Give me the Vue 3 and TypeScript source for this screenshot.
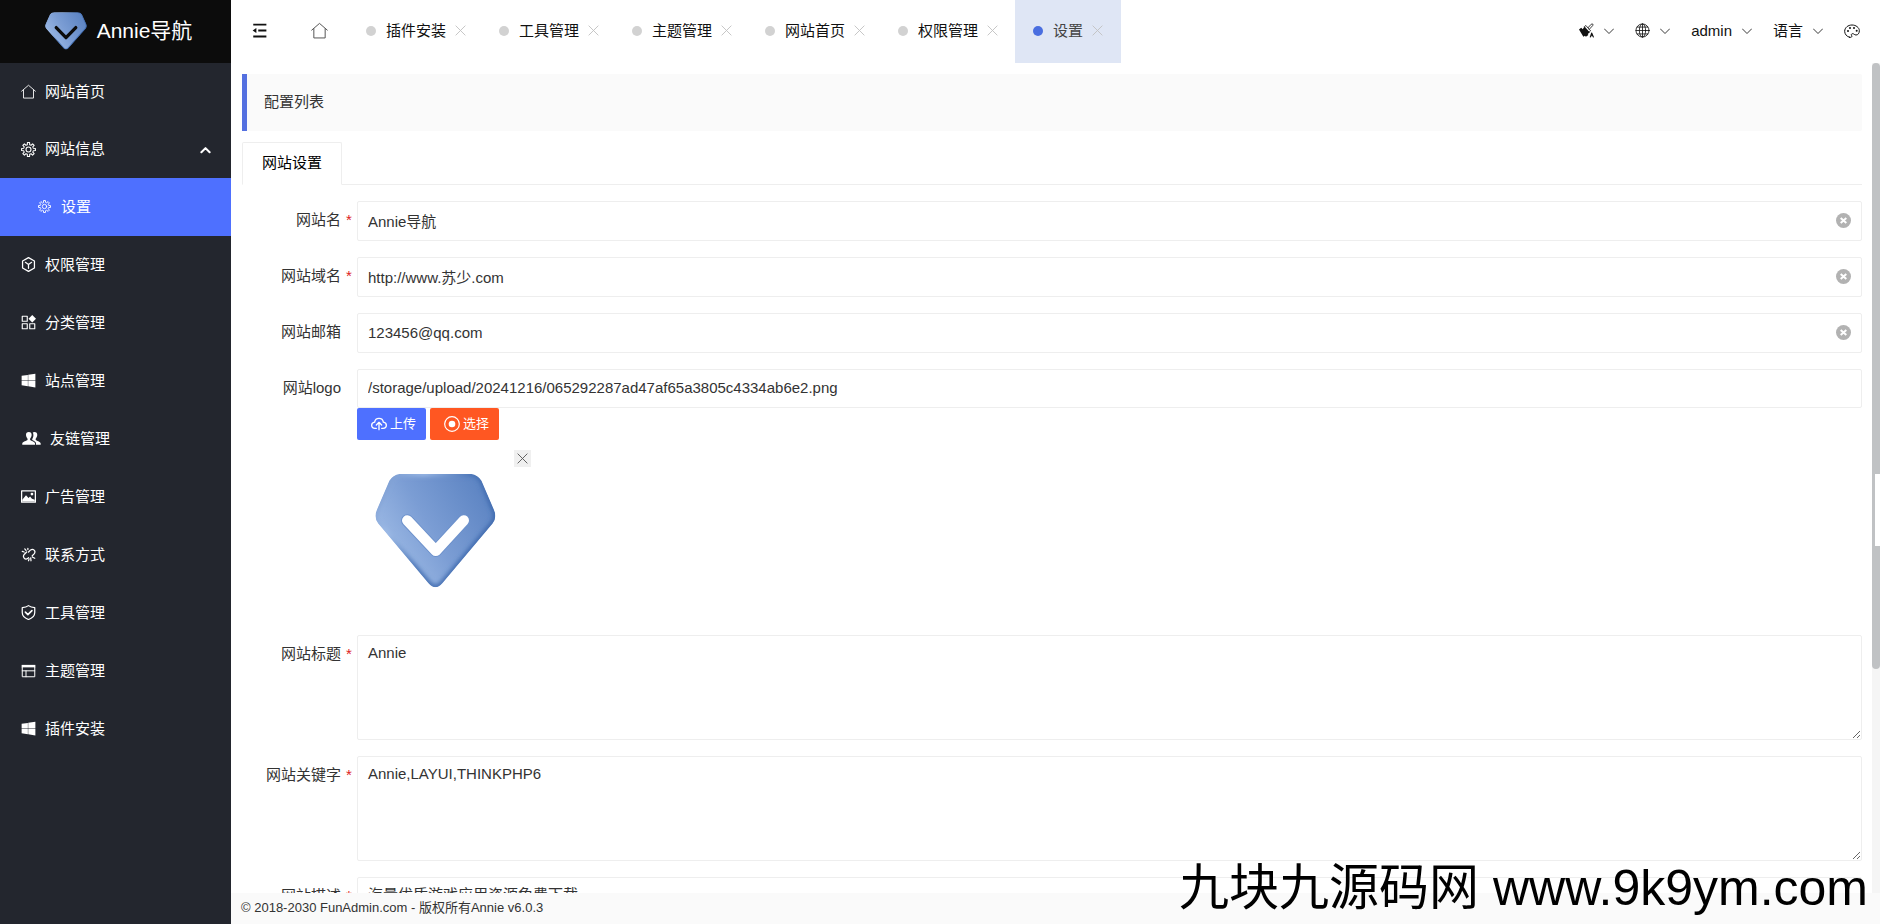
<script setup lang="ts">
import { ref } from 'vue'

interface MenuItem {
  label: string
  icon: string
  wide?: boolean
}

function gearPath(teeth: number, outer: number, inner: number): string {
  const points: string[] = []
  const step = (Math.PI * 2) / teeth
  for (let i = 0; i < teeth; i++) {
    const a = i * step
    const corners: [number, number][] = [
      [a - step * 0.3, inner],
      [a - step * 0.2, outer],
      [a + step * 0.2, outer],
      [a + step * 0.3, inner],
    ]
    for (const [angle, radius] of corners) {
      points.push(`${(12 + radius * Math.sin(angle)).toFixed(2)} ${(12 - radius * Math.cos(angle)).toFixed(2)}`)
    }
  }
  return `M${points.join('L')}Z`
}

const line = 'fill="none" stroke="currentColor" stroke-linejoin="round" stroke-linecap="round"'
const icons: Record<string, string> = {
  home: `<path ${line} stroke-width="1.4" d="M1 11.500 12 2l11 9.500M4 9.500V22.500h16V9.500"/>`,
  gear: `<g ${line} stroke-width="1.700"><path d="${gearPath(8, 11.2, 8)}"/><circle cx="12" cy="12" r="4"/></g>`,
  cube: `<g ${line} stroke-width="2"><path d="M12 1 21.500 6.500v11L12 23l-9.500-5.500v-11Z"/><path d="M7 8.500l5 3.500 5-3.500M12 12v6"/></g>`,
  apps: `<g ${line} stroke-width="1.800"><path d="M2 2h8v8H2ZM2 14h8v8H2ZM14 14h8v8h-8Z"/></g><path fill="currentColor" d="M18 0l6 6-6 6-6-6Z"/>`,
  windows: `<path fill="currentColor" d="M1 4.500 11 3v8.600H1ZM11.600 2.800 23 1v10.600H11.600ZM1 12.300h10V21L1 19.600ZM11.600 12.300H23V23l-11.400-1.800Z"/>`,
  users: `<path fill="currentColor" d="M9.500 1.500c3 0 4.700 2 4.500 5-.2 2.600-1.300 4.500-2.500 5.800V14c1 2 7.500 2.500 8 6v2H-1v-2c.5-3.500 7.500-4 8.500-6v-1.700C6.300 11 5.200 9.100 5 6.500c-.2-3 1.500-5 4.500-5Z"/><path fill="currentColor" d="M18.500 1.500c3 0 4.700 2 4.500 5-.2 2.600-1.300 4.500-2.500 5.800V14c1 2 7.500 2.500 8 6v2H21v-3c-.7-2.500-4-3.500-6-4.700v-1.500c1.300-2 2-4 1.800-6.800 0-1.500-.4-2.600-1-3.500.7-.6 1.600-1 2.700-1Z"/>`,
  picture: `<path ${line} stroke-width="2" d="M1 3h22v18H1Z"/><path fill="currentColor" d="M2 20v-3l6-7 4 4.500 2.500-2.500 3 3.500L22 17v3Z"/><circle cx="17.500" cy="8" r="2.200" fill="currentColor"/>`,
  unlink: `<g ${line} stroke-width="2"><path d="M9 8 5.500 11.500c-4 4.500 1 10 5.500 6.500l1-1M12 8l3-3c4.500-3.500 9.500 1.500 6 6l-3 3M6 3l2 2.500M2 7l3 1M11 2v2M15.500 17.500 16 22M18 16l4 2M13 19l-1 3"/></g>`,
  shield: `<g ${line} stroke-width="2"><path d="M12 1c3 2.300 6 3 10 3.200V12c0 5.500-4 9-10 11.200C6 21 2 17.500 2 12V4.200C6 4 9 3.300 12 1Z"/><path stroke-width="2.600" d="m7 11.500 4 4 6.500-6.500"/></g>`,
  template: `<path fill="currentColor" d="M1 3h22v4H1Z"/><path ${line} stroke-width="1.600" d="M2 7v15h20V7M2 12.500h20M8 12.500V22"/>`,
  fold: `<path fill="currentColor" d="M2 1h21v3H2ZM10 10.500h13v3H10ZM2 20h21v3H2ZM1 12l6-4v8Z"/>`,
  brush: `<path fill="currentColor" d="M0 10.500 3.500 7.500 6 10l2.500-4 8.500 9-3 2.500 1 1.500-4 3-1.500-1.500L7 22Z"/><path ${line} stroke-width="1.300" d="M9 5.500 11 4l7.500 8.500-2 1.800ZM14.500 7.500l5-5.500c2-1.700 4 .5 2.300 2.300L16.500 10"/><path ${line} stroke-width="1.700" d="m18 22.500 2.300-6.500 2.700 6.500M18.800 20.500h3.200"/>`,
  globe: `<g ${line} stroke-width="1.300"><circle cx="12" cy="12" r="10.500"/><ellipse cx="12" cy="12" rx="5" ry="10.500"/><path d="M12 1.500v21M1.500 12h21M3.500 6.500h17M3.500 17.500h17"/></g>`,
  palette: `<path ${line} stroke-width="1.500" d="M8.500 21.500C4 20.500 1 16.500 1 12.500 1 7 6 3 12 3s11 4 11 8.500c0 4-2 6.500-5 6.500-2.500 0-3-2-5-2s-2.500 1.500-1.500 3-.5 3.200-3 2.500Z"/><g fill="currentColor"><circle cx="6" cy="12" r="1.500"/><circle cx="9" cy="7.500" r="1.500"/><circle cx="15" cy="7.500" r="1.500"/><circle cx="19" cy="11.500" r="1.500"/></g>`,
  down: `<path ${line} stroke-width="2" d="M1 7l11 11L23 7"/>`,
  up: `<path ${line} stroke-width="4.500" d="M3 18l9-9 9 9"/>`,
  close: `<path ${line} stroke-width="2" d="M2 2l20 20M22 2 2 22"/>`,
  clear: `<circle cx="12" cy="12" r="12" fill="#b2b2b2"/><path fill="none" stroke="#fff" stroke-width="3.200" d="m7.500 8 9 8m0-8-9 8"/>`,
  cloud: `<g ${line} stroke-width="2"><path d="M8 18.500H6C3 18.500 1 16.500 1 14s2-4.500 4.500-4.800C6 5.500 8.500 3.500 12 3.500s6 2 6.500 5.700c2.500.3 4.500 2.300 4.500 4.800s-2 4.500-5 4.500h-2"/><path d="M12 20.500V10M8 13.500l4-4 4 4"/></g>`,
  radio: `<circle cx="12" cy="12" r="11" ${line} stroke-width="1.800"/><circle cx="12" cy="12" r="5" fill="currentColor"/>`,
}

const gemOutline =
  'M98 7H320Q348 7 362 30L403 124Q415 150 399 170L232 366Q209 392 186 366L19 170Q3 150 15 124L56 30Q70 7 98 7Z'

const topMenu: MenuItem = { label: '网站首页', icon: 'home' }
const menu: MenuItem[] = [
  { label: '权限管理', icon: 'cube' },
  { label: '分类管理', icon: 'apps' },
  { label: '站点管理', icon: 'windows' },
  { label: '友链管理', icon: 'users', wide: true },
  { label: '广告管理', icon: 'picture' },
  { label: '联系方式', icon: 'unlink' },
  { label: '工具管理', icon: 'shield' },
  { label: '主题管理', icon: 'template' },
  { label: '插件安装', icon: 'windows' },
]

const tabs = ['插件安装', '工具管理', '主题管理', '网站首页', '权限管理', '设置']
const activeTab = ref('设置')

const textFields = ref([
  { id: 'name', label: '网站名', required: true, value: 'Annie导航' },
  { id: 'domain', label: '网站域名', required: true, value: 'http://www.苏少.com' },
  { id: 'email', label: '网站邮箱', required: false, value: '123456@qq.com' },
])
const logoPath = ref('/storage/upload/20241216/065292287ad47af65a3805c4334ab6e2.png')
const areas = ref([
  { id: 'title', label: '网站标题', value: 'Annie' },
  { id: 'keywords', label: '网站关键字', value: 'Annie,LAYUI,THINKPHP6' },
  { id: 'description', label: '网站描述', value: '海量优质游戏应用资源免费下载' },
])
</script>

<template>
  <div class="app">
    <svg class="defs" aria-hidden="true">
      <defs>
        <linearGradient id="gem" x1="0" y1="0.7" x2="0.9" y2="0.2">
          <stop offset="0" stop-color="#a3bfe8" />
          <stop offset="0.5" stop-color="#7b9dd4" />
          <stop offset="1" stop-color="#5f86c4" />
        </linearGradient>
        <linearGradient id="gemEdge" x1="0" y1="0" x2="1" y2="0.6">
          <stop offset="0" stop-color="#6d90c8" />
          <stop offset="0.3" stop-color="#a0bde8" />
          <stop offset="0.6" stop-color="#4570b3" />
          <stop offset="1" stop-color="#3a66aa" />
        </linearGradient>
        <filter id="gemSoft"><feGaussianBlur stdDeviation="7" /></filter>
        <clipPath id="gemClip"><path :d="gemOutline" transform="translate(-8 -7) scale(0.97 0.93)" /></clipPath>
        <symbol id="gemShape" viewBox="0 0 390 348" preserveAspectRatio="none">
          <g clip-path="url(#gemClip)">
            <g transform="translate(-8 -7) scale(0.97 0.93)">
              <path :d="gemOutline" fill="url(#gem)" />
              <path :d="gemOutline" fill="none" stroke="url(#gemEdge)" stroke-width="16" filter="url(#gemSoft)" />
            </g>
          </g>
        </symbol>
      </defs>
    </svg>

    <aside class="sidebar">
      <a class="brand" href="#">
        <svg class="brand-logo" viewBox="0 0 390 348" aria-hidden="true">
          <use href="#gemShape" width="390" height="348" />
          <path d="M104 142 195 236 286 142" class="brand-check" />
        </svg>
        <span>Annie导航</span>
      </a>
      <nav class="menu">
        <a class="menu-item" href="#">
          <svg class="menu-icon" viewBox="0 0 24 24" v-html="icons[topMenu.icon]" />
          <span>{{ topMenu.label }}</span>
        </a>
        <div class="group">
          <a class="menu-item" href="#">
            <svg class="menu-icon" viewBox="0 0 24 24" v-html="icons.gear" />
            <span>网站信息</span>
            <svg class="menu-arrow" viewBox="0 0 24 24" v-html="icons.up" />
          </a>
          <a class="menu-item sub" href="#">
            <svg class="menu-icon" viewBox="0 0 24 24" v-html="icons.gear" />
            <span>设置</span>
          </a>
        </div>
        <a v-for="item in menu" :key="item.label" class="menu-item" href="#">
          <svg
            class="menu-icon"
            :class="{ wide: item.wide }"
            :viewBox="item.wide ? '-3 0 32 24' : '0 0 24 24'"
            v-html="icons[item.icon]"
          />
          <span>{{ item.label }}</span>
        </a>
      </nav>
    </aside>

    <div class="body">
      <header class="header">
        <button class="icon-button fold" aria-label="收起菜单">
          <svg class="icon-md" viewBox="0 0 24 24" v-html="icons.fold" />
        </button>
        <button class="icon-button home" aria-label="主页">
          <svg class="icon-home" viewBox="0 0 24 24" v-html="icons.home" />
        </button>
        <nav class="tabs">
          <div v-for="tab in tabs" :key="tab" class="tab" :class="{ active: tab === activeTab }">
            <button class="tab-label" @click="activeTab = tab"><i class="dot" />{{ tab }}</button>
            <button class="tab-close" aria-label="关闭">
              <svg class="icon-sm" viewBox="0 0 24 24" v-html="icons.close" />
            </button>
          </div>
        </nav>
        <div class="tools">
          <button class="tool" aria-label="清除缓存">
            <svg class="icon-md" viewBox="0 0 24 24" v-html="icons.brush" />
            <svg class="chevron" viewBox="0 0 24 24" v-html="icons.down" />
          </button>
          <button class="tool" aria-label="站点">
            <svg class="icon-md" viewBox="0 0 24 24" v-html="icons.globe" />
            <svg class="chevron" viewBox="0 0 24 24" v-html="icons.down" />
          </button>
          <button class="tool">
            admin
            <svg class="chevron" viewBox="0 0 24 24" v-html="icons.down" />
          </button>
          <button class="tool">
            语言
            <svg class="chevron" viewBox="0 0 24 24" v-html="icons.down" />
          </button>
          <button class="tool" aria-label="主题">
            <svg class="icon-lg" viewBox="0 0 24 24" v-html="icons.palette" />
          </button>
        </div>
      </header>

      <div class="viewport">
        <main class="content">
          <h1 class="quote">配置列表</h1>
          <div class="card-tabs">
            <button class="card-tab">网站设置</button>
          </div>
          <form class="form" @submit.prevent>
            <div v-for="field in textFields" :key="field.id" class="row">
              <label class="label" :for="field.id">{{ field.label }}<i class="star">{{ field.required ? '*' : '' }}</i></label>
              <div class="control">
                <input :id="field.id" v-model="field.value" class="input" type="text" />
                <button class="clear" type="button" aria-label="清空" @click="field.value = ''">
                  <svg class="icon-md" viewBox="0 0 24 24" v-html="icons.clear" />
                </button>
              </div>
            </div>
            <div class="row">
              <label class="label" for="logo">网站logo<i class="star" /></label>
              <div class="control">
                <input id="logo" v-model="logoPath" class="input joined" type="text" />
                <div class="buttons">
                  <button class="btn upload" type="button">
                    <svg class="icon-lg" viewBox="0 0 24 24" v-html="icons.cloud" />上传
                  </button>
                  <button class="btn choose" type="button">
                    <svg class="icon-lg" viewBox="0 0 24 24" v-html="icons.radio" />选择
                  </button>
                </div>
                <div class="preview">
                  <svg class="preview-image" viewBox="0 0 390 368" preserveAspectRatio="none" role="img" aria-label="logo">
                    <use href="#gemShape" width="390" height="368" />
                    <path class="preview-shade" d="M104 150 196 248 286 150" />
                    <path class="preview-check" d="M104 150 196 248 286 150" />
                  </svg>
                  <button class="remove" type="button" aria-label="删除">
                    <svg class="icon-sm" viewBox="0 0 24 24" v-html="icons.close" />
                  </button>
                </div>
              </div>
            </div>
            <div v-for="area in areas" :key="area.id" class="row area-row">
              <label class="label" :for="area.id">{{ area.label }}<i class="star">*</i></label>
              <div class="control">
                <textarea :id="area.id" v-model="area.value" class="textarea" />
              </div>
            </div>
          </form>
        </main>
        <div class="scrollbar" aria-hidden="true">
          <div class="thumb" />
          <div class="handle" />
        </div>
      </div>

      <footer class="footer">© 2018-2030 FunAdmin.com - 版权所有Annie v6.0.3</footer>
    </div>

    <div class="watermark">九块九源码网 www.9k9ym.com</div>
  </div>
</template>

<style>
body {
  margin: 0;
}
</style>

<style scoped>
.app {
  display: flex;
  height: 100vh;
  overflow: hidden;
  position: relative;
  background: #fff;
  color: #333;
  font: 15px/20px 'Liberation Sans', 'Noto Sans CJK SC', sans-serif;
}
.app * {
  box-sizing: border-box;
}
.defs {
  position: absolute;
  width: 0;
  height: 0;
}
button,
input,
textarea {
  font: inherit;
  color: inherit;
}
button {
  padding: 0;
  border: 0;
  background: none;
  cursor: pointer;
}
svg {
  display: block;
  flex: none;
}
.icon-sm {
  width: 11px;
  height: 11px;
}
.icon-md {
  width: 15px;
  height: 15px;
}
.icon-lg {
  width: 16px;
  height: 16px;
}
.icon-home {
  width: 17px;
  height: 17px;
  color: #555;
}

.sidebar {
  flex: none;
  width: 231px;
  background: #23262e;
  color: #fff;
}
.brand {
  display: flex;
  align-items: center;
  justify-content: center;
  gap: 10px;
  height: 63px;
  padding: 0 0 1px 6px;
  background: #0c0c0c;
  color: #fff;
  font-size: 21px;
  line-height: 30px;
  text-decoration: none;
}
.brand-logo {
  width: 42px;
  height: 38px;
}
.brand-check {
  fill: none;
  stroke: #0c0c0c;
  stroke-width: 30;
  stroke-linecap: round;
  stroke-linejoin: round;
}
.menu-item {
  display: flex;
  align-items: center;
  gap: 9px;
  height: 58px;
  padding: 0 20px 1px 21px;
  color: #fff;
  text-decoration: none;
}
.menu-icon {
  width: 15px;
  height: 15px;
}
.menu-icon.wide {
  width: 20px;
}
.menu-arrow {
  width: 11px;
  height: 11px;
  margin-left: auto;
}
.group .menu-item {
  height: 57px;
}
.group .menu-item.sub {
  gap: 10px;
  height: 58px;
  padding-left: 38px;
  background: #4e70ff;
}
.sub .menu-icon {
  width: 13px;
  height: 13px;
}

.body {
  flex: 1;
  min-width: 0;
  display: flex;
  flex-direction: column;
}
.header {
  flex: none;
  display: flex;
  align-items: center;
  height: 63px;
  padding: 0 20px;
  color: #111;
}
.icon-button {
  display: flex;
  justify-content: center;
  padding-bottom: 2px;
}
.fold {
  width: 17px;
}
.home {
  width: 17px;
  margin: 0 22px 0 43px;
}
.tabs {
  display: flex;
  align-self: stretch;
}
.tab {
  display: flex;
  align-items: center;
  padding: 0 17px 2px 16px;
  gap: 9px;
}
.tab.active {
  padding-right: 18px;
  padding-left: 18px;
  background: #dfe6f5;
  color: #444;
}
.tab-label {
  display: flex;
  align-items: center;
  gap: 10px;
}
.dot {
  width: 10px;
  height: 10px;
  border-radius: 50%;
  background: #d2d2d2;
}
.active .dot {
  background: #4a6ee0;
}
.tab-close {
  color: #c2c2c2;
}
.tools {
  display: flex;
  gap: 21px;
  margin-left: auto;
  padding-bottom: 2px;
}
.tool {
  display: flex;
  align-items: center;
  gap: 10px;
}
.chevron {
  width: 10px;
  height: 10px;
}

.viewport {
  flex: 1;
  min-height: 0;
  display: flex;
}
.content {
  flex: 1;
  min-width: 0;
  overflow: hidden;
  padding: 11px 10px 0 11px;
}
.quote {
  margin: 0 0 11px;
  padding: 18px 17px 19px;
  border-left: 5px solid #5470e0;
  border-radius: 0 2px 2px 0;
  background: #fafafa;
  font-size: 15px;
  line-height: 20px;
  font-weight: 400;
}
.card-tabs {
  display: flex;
  border-bottom: 1px solid #eee;
}
.card-tab {
  height: 43px;
  margin-bottom: -1px;
  padding: 0 19px 2px;
  border: 1px solid #eee;
  border-bottom-color: #fff;
  border-radius: 2px 2px 0 0;
  background: #fff;
  color: #000;
}
.form {
  display: flex;
  flex-direction: column;
  gap: 16px;
  padding-top: 16px;
}
.row {
  display: flex;
  align-items: flex-start;
}
.label {
  flex: none;
  display: flex;
  justify-content: flex-end;
  width: 115px;
  padding-top: 9px;
}
.star {
  width: 16px;
  padding-left: 5px;
  color: #d22;
  font-style: normal;
}
.control {
  position: relative;
  flex: 1;
  min-width: 0;
}
.input,
.textarea {
  display: block;
  width: 100%;
  border: 1px solid #eee;
  border-radius: 2px;
  background: #fff;
  outline: none;
}
.input {
  height: 40px;
  padding: 0 40px 2px 10px;
}
.input.joined {
  height: 39px;
}
.textarea {
  height: 105px;
  padding: 7px 10px;
  resize: vertical;
}
.clear {
  position: absolute;
  top: 12px;
  right: 11px;
}
.buttons {
  display: flex;
  gap: 4px;
}
.btn {
  display: flex;
  align-items: center;
  gap: 3px;
  height: 32px;
  padding: 0 10px 1px 14px;
  border-radius: 2px;
  color: #fff;
  font-size: 13px;
}
.upload {
  background: #4e70ff;
}
.choose {
  background: #ff5722;
}
.preview {
  display: flex;
  align-items: flex-start;
  gap: 18px;
  height: 169px;
  margin-top: 10px;
  padding-left: 18px;
}
.preview-image {
  width: 121px;
  height: 114px;
  margin-top: 24px;
}
.preview-check,
.preview-shade {
  fill: none;
  stroke: #fff;
  stroke-width: 34;
  stroke-linecap: round;
  stroke-linejoin: round;
}
.preview-shade {
  stroke: #6c91cc;
  stroke-width: 40;
}
.remove {
  display: flex;
  align-items: center;
  justify-content: center;
  width: 17px;
  height: 17px;
  background: #f0f0f0;
  color: #555;
}

.scrollbar {
  position: relative;
  flex: none;
  width: 8px;
  background: #f5f5f5;
}
.thumb {
  height: 73%;
  border-radius: 4px;
  background: #c0c2c4;
}
.handle {
  position: absolute;
  top: 411px;
  right: 0;
  width: 5px;
  height: 72px;
  background: #fff;
}
.footer {
  flex: none;
  padding: 5px 10px 6px;
  background: #fafafa;
  font-size: 13px;
}
.watermark {
  position: absolute;
  right: 12px;
  bottom: 6px;
  color: #000;
  font-size: 50px;
  line-height: 60px;
  white-space: nowrap;
}
</style>
